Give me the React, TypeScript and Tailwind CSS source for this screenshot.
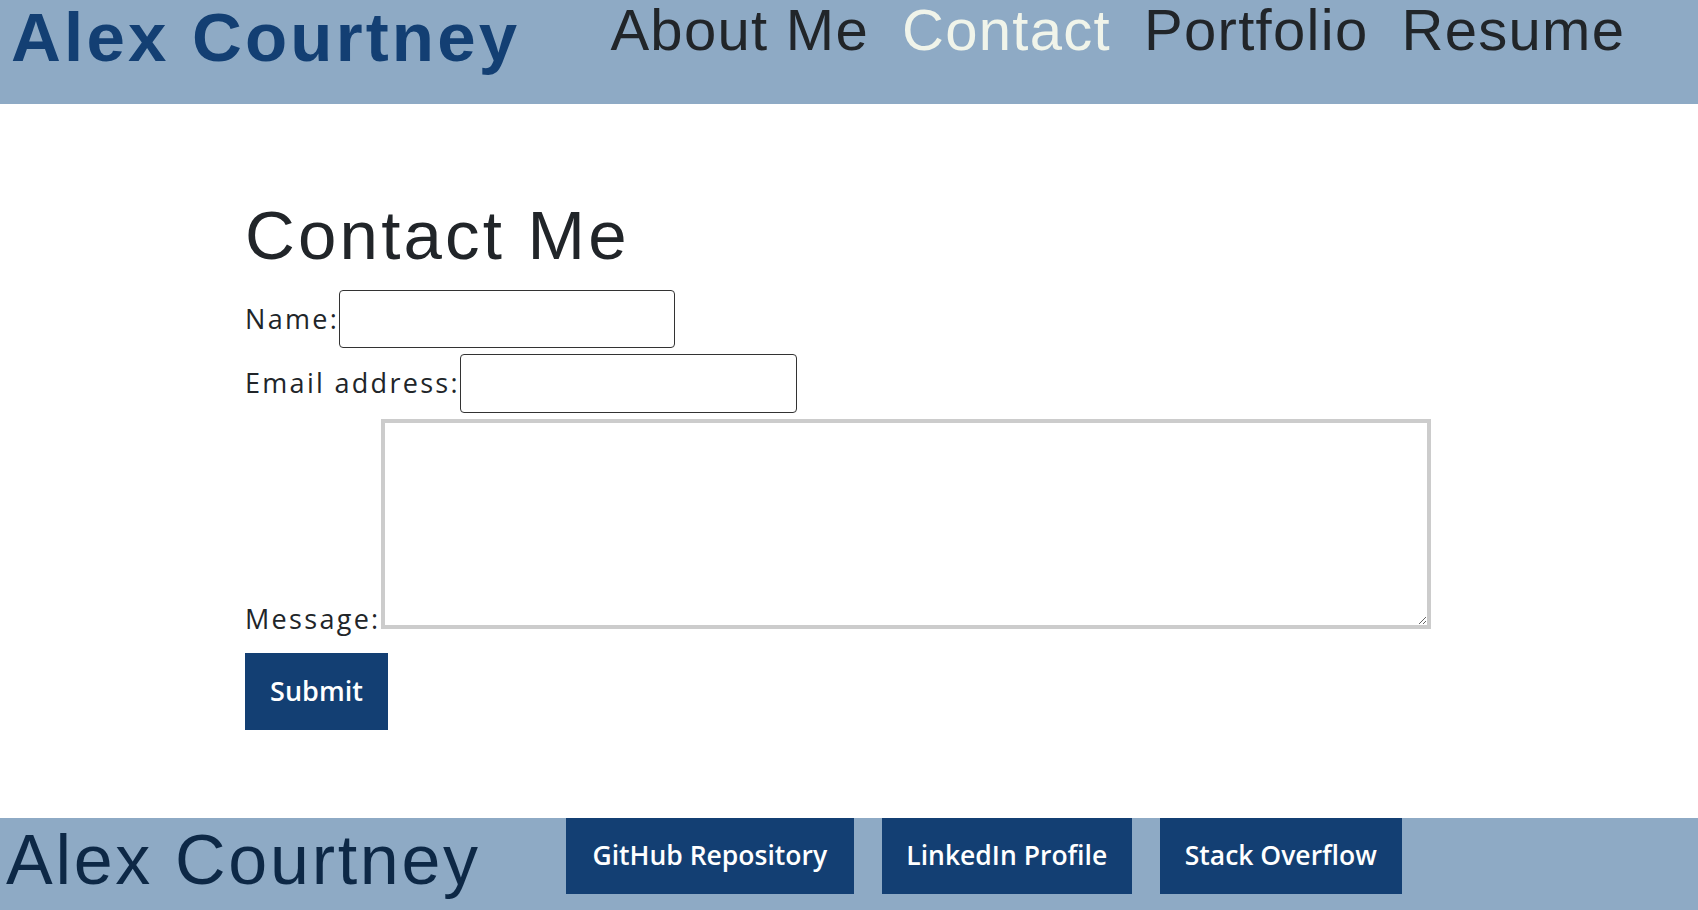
const arial = "font-['Liberation_Sans',Arial,sans-serif]";
const segoe = "font-['Open_Sans','Noto_Sans',sans-serif]";

const NavLink = ({ label, active }: { label: string; active?: boolean }) => (
    <a href="#" className={`text-[58px] leading-none tracking-[1.3px] ${active ? "text-[#f0f4ea]" : "text-[#212529]"}`}>
        {label}
    </a>
);

const FooterButton = ({ label, width }: { label: string; width: string }) => (
    <a href="#" className={`flex h-[76px] ${width} items-center justify-center bg-[#133f73] ${segoe} text-[26.5px] font-semibold text-white`}>
        {label}
    </a>
);

export default function App() {
    return (
        <div className={`flex min-h-[910px] flex-col bg-white ${arial}`}>
            <header className="flex h-[104px] items-start bg-[#8eaac5]">
                <h1 className="ml-[11px] pt-[3px] text-[69px] font-bold leading-none tracking-[3.2px] text-[#133f73]">
                    Alex Courtney
                </h1>
                <nav className="ml-[90px] flex gap-[33px] pt-[1px]">
                    <NavLink label="About Me" />
                    <NavLink label="Contact" active />
                    <NavLink label="Portfolio" />
                    <NavLink label="Resume" />
                </nav>
            </header>

            <main className="flex-1 pl-[245px] pt-[97px]">
                <h2 className="text-[69px] leading-none tracking-[3.2px] text-[#212529]">Contact Me</h2>
                <form className={`mt-[20px] flex flex-col ${segoe} text-[27px] tracking-[2.3px] text-[#212529]`}>
                    <div className="flex items-center">
                        <label>Name:</label>
                        <input type="text" className="h-[58px] w-[336px] rounded-[4px] border border-[#333] bg-white" />
                    </div>
                    <div className="mt-[6px] flex items-center">
                        <label>Email address:</label>
                        <input type="email" className="h-[59px] w-[337px] rounded-[4px] border border-[#333] bg-white" />
                    </div>
                    <div className="mt-[6px] flex items-end">
                        <label className="mb-[-3px] leading-none">Message:</label>
                        <textarea className="h-[210px] w-[1050px] border-4 border-[#cccccc] bg-white" />
                    </div>
                    <div className="mt-[24px]">
                        <button type="submit" className="h-[77px] w-[143px] bg-[#133f73] text-[27px] font-semibold tracking-normal text-white">
                            Submit
                        </button>
                    </div>
                </form>
            </main>

            <footer className="flex h-[92px] items-start bg-[#8eaac5]">
                <div className="ml-[6px] mt-[7px] text-[70px] leading-none tracking-[2.7px] text-[#0d2846]">Alex Courtney</div>
                <div className="ml-[85px] flex gap-[28px]">
                    <FooterButton label="GitHub Repository" width="w-[288px]" />
                    <FooterButton label="LinkedIn Profile" width="w-[250px]" />
                    <FooterButton label="Stack Overflow" width="w-[242px]" />
                </div>
            </footer>
        </div>
    );
}
